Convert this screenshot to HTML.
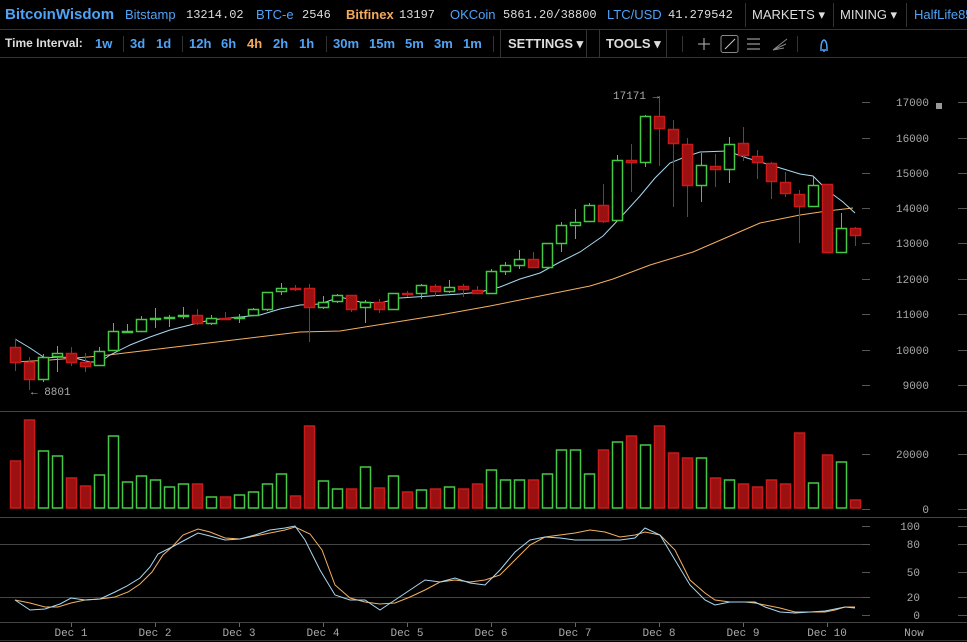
<!DOCTYPE html>
<html><head><meta charset="utf-8">
<style>
html,body{margin:0;padding:0;background:#000;width:967px;height:642px;overflow:hidden;font-family:"Liberation Sans",sans-serif;}
.bar1{position:absolute;left:0;top:0;width:967px;height:29px;border-bottom:1px solid #333;}
.bar2{position:absolute;left:0;top:30px;width:967px;height:27px;border-bottom:1px solid #333;}
.t{position:absolute;white-space:nowrap;font-size:13px;}
.b{color:#4fa3f7;}
.m{font-family:"Liberation Mono",monospace;color:#ddd;font-size:12px;}
.w{color:#ddd;}
.sep{position:absolute;width:1px;background:#333;}
</style></head><body>
<div class="bar1">
<span class="t b" style="left:5px;top:6px;font-size:15px;font-weight:bold">BitcoinWisdom</span>
<span class="t b" style="left:125px;top:7px">Bitstamp</span><span class="t m" style="left:186px;top:8px">13214.02</span>
<span class="t b" style="left:256px;top:7px">BTC-e</span><span class="t m" style="left:302px;top:8px">2546</span>
<span class="t" style="left:346px;top:7px;color:#f5a95a;font-weight:bold">Bitfinex</span><span class="t m" style="left:399px;top:8px">13197</span>
<span class="t b" style="left:450px;top:7px">OKCoin</span><span class="t m" style="left:503px;top:8px">5861.20/38800</span>
<span class="t b" style="left:607px;top:7px">LTC/USD</span><span class="t m" style="left:668px;top:8px">41.279542</span>
<div class="sep" style="left:745px;top:3px;height:24px"></div>
<span class="t w" style="left:752px;top:7px">MARKETS ▾</span>
<div class="sep" style="left:833px;top:3px;height:24px"></div>
<span class="t w" style="left:840px;top:7px">MINING ▾</span>
<div class="sep" style="left:906px;top:3px;height:24px"></div>
<span class="t b" style="left:914px;top:7px">HalfLife85</span>
</div>
<div class="bar2">
<span class="t w" style="left:5px;top:6px;font-weight:bold;font-size:12px">Time Interval:</span>
<span class="t b" style="left:95px;top:6px;font-weight:bold">1w</span>
<div class="sep" style="left:123px;top:6px;height:16px"></div>
<span class="t b" style="left:130px;top:6px;font-weight:bold">3d</span>
<span class="t b" style="left:156px;top:6px;font-weight:bold">1d</span>
<div class="sep" style="left:182px;top:6px;height:16px"></div>
<span class="t b" style="left:189px;top:6px;font-weight:bold">12h</span>
<span class="t b" style="left:221px;top:6px;font-weight:bold">6h</span>
<span class="t" style="left:247px;top:6px;font-weight:bold;color:#f5a95a">4h</span>
<span class="t b" style="left:273px;top:6px;font-weight:bold">2h</span>
<span class="t b" style="left:299px;top:6px;font-weight:bold">1h</span>
<div class="sep" style="left:326px;top:6px;height:16px"></div>
<span class="t b" style="left:333px;top:6px;font-weight:bold">30m</span>
<span class="t b" style="left:369px;top:6px;font-weight:bold">15m</span>
<span class="t b" style="left:405px;top:6px;font-weight:bold">5m</span>
<span class="t b" style="left:434px;top:6px;font-weight:bold">3m</span>
<span class="t b" style="left:463px;top:6px;font-weight:bold">1m</span>
<div class="sep" style="left:493px;top:6px;height:16px"></div>
<div class="sep" style="left:500px;top:0px;height:27px"></div>
<span class="t w" style="left:508px;top:6px;font-weight:bold">SETTINGS ▾</span>
<div class="sep" style="left:586px;top:0px;height:27px"></div>
<div class="sep" style="left:599px;top:0px;height:27px"></div>
<span class="t w" style="left:606px;top:6px;font-weight:bold">TOOLS ▾</span>
<div class="sep" style="left:666px;top:0px;height:27px"></div>
<div class="sep" style="left:682px;top:6px;height:16px"></div>
<svg style="position:absolute;left:690px;top:0" width="160" height="27">
<path d="M14 8v12M8 14h12" stroke="#bbb" stroke-width="1"/>
<rect x="31" y="5.5" width="17" height="17" rx="2" fill="none" stroke="#888"/>
<path d="M35 19L45 9" stroke="#ccc"/>
<path d="M57 9h13M57 14h13M57 19h13" stroke="#bbb"/>
<path d="M83 20L97 9M83 20L96 14M83 20L94 18" stroke="#888"/>
<rect x="107" y="6" width="1" height="16" fill="#333"/>
<path d="M130 20h8M131 19q0-8 3-9q3 1 3 9M134 20v2" stroke="#4fa3f7" stroke-width="1.5" fill="none"/>
</svg>
</div>
<svg id="c" style="position:absolute;left:0;top:0" width="967" height="642"></svg>
<script>
var C=[
[347,362,339,371,'r'],[362,379,357,390,'r'],[357,379,354,382,'g'],[353,356,346,372,'g'],[353,362,347,366,'r'],[362,366,353,372,'r'],[351,365,347,365,'g'],[331,350,323,350,'g'],[331,332,324,333,'g'],[319,331,316,331,'g'],
[318,318,308,328,'g'],[317,318,315,327,'g'],[315,315,307,319,'g'],[315,323,309,325,'r'],[318,323,315,325,'g'],[318,318,312,319,'r'],[317,318,314,323,'g'],[309,315,308,316,'g'],[292,309,292,311,'g'],[288,291,283,295,'g'],
[288,288,285,291,'r'],[288,307,284,342,'r'],[302,307,296,309,'g'],[295,301,294,303,'g'],[295,309,295,312,'r'],[302,307,300,323,'g'],[302,309,299,313,'r'],[293,309,293,309,'g'],[293,293,291,297,'r'],[285,293,284,299,'g'],
[286,291,284,296,'r'],[287,291,280,293,'g'],[286,289,284,297,'r'],[290,293,286,294,'r'],[271,293,269,293,'g'],[265,271,262,275,'g'],[259,265,250,269,'g'],[259,267,252,268,'r'],[243,267,243,267,'g'],[225,243,222,252,'g'],
[222,225,209,239,'g'],[205,221,203,222,'g'],[205,221,184,223,'r'],[160,220,155,220,'g'],[160,162,144,192,'r'],[116,162,115,167,'g'],[116,128,96,166,'r'],[129,143,120,207,'r'],[144,185,138,217,'r'],[165,185,153,202,'g'],
[166,169,154,187,'r'],[144,169,137,183,'g'],[143,155,127,161,'r'],[156,162,150,179,'r'],[163,181,162,199,'r'],[182,193,172,197,'r'],[194,206,190,243,'r'],[185,206,177,206,'g'],[184,252,184,252,'r'],[228,252,213,253,'g'],[228,235,227,246,'r']];
var V=[461,420,451,456,478,486,475,436,482,476,480,487,484,484,497,497,495,492,484,474,496,426,481,489,489,467,488,476,492,490,489,487,489,484,470,480,480,480,474,450,450,474,450,442,436,445,426,453,458,458,478,480,484,487,480,484,433,483,455,462,500];
var s='';
s+='<line x1="0" y1="411.5" x2="967" y2="411.5" stroke="#444"/>';
s+='<line x1="0" y1="517.5" x2="967" y2="517.5" stroke="#444"/>';
s+='<line x1="0" y1="544.5" x2="870" y2="544.5" stroke="#444"/>';
s+='<line x1="0" y1="597.5" x2="870" y2="597.5" stroke="#444"/>';
s+='<line x1="0" y1="622.5" x2="967" y2="622.5" stroke="#444"/>';
s+='<line x1="0" y1="640.5" x2="967" y2="640.5" stroke="#333"/>';
var ff='font-family="Liberation Mono,monospace" font-size="11" fill="#aaa"';
var py=[[17000,102],[16000,138],[15000,173],[14000,208],[13000,243],[12000,279],[11000,314],[10000,350],[9000,385]];
py.forEach(function(p){s+='<line x1="862" y1="'+(p[1]+.5)+'" x2="870" y2="'+(p[1]+.5)+'" stroke="#555"/><line x1="958" y1="'+(p[1]+.5)+'" x2="967" y2="'+(p[1]+.5)+'" stroke="#555"/>';
s+='<text x="929" y="'+(p[1]+4)+'" text-anchor="end" '+ff+'>'+p[0]+'</text>';});
[[20000,454],[0,509]].forEach(function(p){s+='<line x1="862" y1="'+(p[1]+.5)+'" x2="870" y2="'+(p[1]+.5)+'" stroke="#555"/><line x1="958" y1="'+(p[1]+.5)+'" x2="967" y2="'+(p[1]+.5)+'" stroke="#555"/><text x="929" y="'+(p[1]+4)+'" text-anchor="end" '+ff+'>'+p[0]+'</text>';});
[[100,526],[80,544],[50,572],[20,597],[0,615]].forEach(function(p){s+='<line x1="862" y1="'+(p[1]+.5)+'" x2="870" y2="'+(p[1]+.5)+'" stroke="#555"/><line x1="958" y1="'+(p[1]+.5)+'" x2="967" y2="'+(p[1]+.5)+'" stroke="#555"/><text x="920" y="'+(p[1]+4)+'" text-anchor="end" '+ff+'>'+p[0]+'</text>';});
s+='<rect x="936" y="103" width="6" height="6" fill="#999"/>';
for(var d=1;d<=10;d++){var x=71+(d-1)*84;s+='<line x1="'+(x+.5)+'" y1="623" x2="'+(x+.5)+'" y2="627" stroke="#666"/><text x="'+x+'" y="636" text-anchor="middle" '+ff+'>Dec '+d+'</text>';}
s+='<text x="914" y="636" text-anchor="middle" '+ff+'>Now</text>';
function pl(pts,c){return '<polyline fill="none" stroke="'+c+'" stroke-width="1" points="'+pts+'"/>';}
s+=pl('15,362 50,360 100,356 150,350 200,344 250,338 300,332 340,331 390,323 440,315 490,306 540,296 590,286 613,279 650,265 693,252 730,236 760,223 800,215 827,211 853,208','#f5b060');
s+=pl('15,339 30,348 45,358 60,357 75,358 90,362 100,362 110,355 130,345 150,337 170,330 190,325 210,320 240,317 260,315 280,309 300,305 320,304 340,297 360,302 380,303 400,298 430,296 460,294 480,292 500,287 520,279 540,273 560,262 580,252 603,236 620,218 640,196 655,178 670,163 685,157 700,152 727,151 747,158 777,167 800,174 813,176 827,190 843,202 855,213','#a8d8f0');
C.forEach(function(c,i){var x=15+14*i,r=c[4]=='r';var col=r?'#c81a1a':'#46c846';
s+='<line x1="'+(x+.5)+'" y1="'+c[2]+'" x2="'+(x+.5)+'" y2="'+c[3]+'" stroke="'+col+'"/>';
var h=Math.max(c[1]-c[0],1);
s+='<rect x="'+(x-4.5)+'" y="'+(c[0]+.5)+'" width="10" height="'+h+'" fill="'+(r?'#9b1010':'#000')+'" stroke="'+col+'" stroke-width="1.5"/>';
var v=V[i];s+='<rect x="'+(x-4.5)+'" y="'+v+'" width="10" height="'+(508-v)+'" fill="'+(r?'#9b1010':'none')+'" stroke="'+col+'" stroke-width="1.5"/>';});
s+='<text x="613" y="99" '+ff+' fill="#ccc">17171 →</text>';
s+='<text x="31" y="395" '+ff+' fill="#ccc">← 8801</text>';
s+=pl('15,600 30,603 45,607 58,607 71,603 85,600 100,599 115,597 128,592 140,584 152,572 163,555 172,547 183,535 198,529 210,532 225,538 240,539 255,536 270,533 285,530 295,527 310,534 322,550 335,585 350,598 365,602 380,604 395,603 410,597 425,590 440,582 455,580 470,582 485,580 500,575 515,560 530,545 545,537 560,535 575,533 590,530 605,532 620,537 635,535 645,532 660,535 675,550 690,580 705,593 715,600 730,602 745,602 755,603 765,605 780,608 795,612 810,612 825,612 835,610 845,607 855,607','#f5b060');
s+=pl('15,600 30,610 45,609 60,604 71,598 85,600 100,599 115,592 127,586 140,578 150,567 158,554 172,547 185,540 198,533 210,536 225,540 240,539 255,535 270,530 285,528 295,526 305,540 320,570 335,595 350,600 365,600 380,610 395,600 410,590 425,580 440,582 455,578 470,583 485,585 500,570 515,552 530,540 545,537 560,538 575,540 590,540 605,540 620,540 635,538 645,528 660,535 675,560 690,585 705,600 715,605 730,602 745,602 755,602 765,607 780,612 795,613 810,612 825,611 835,609 845,607 855,608','#a8d8f0');
document.getElementById('c').innerHTML=s;
</script>
</body></html>
